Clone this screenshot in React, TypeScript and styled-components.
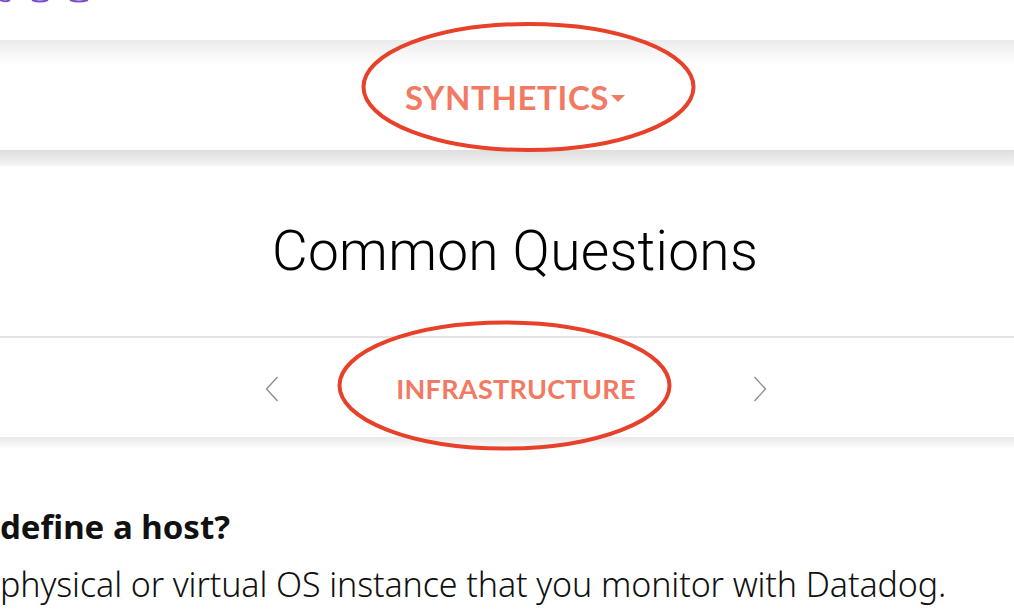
import React from "react";
import styled, { createGlobalStyle } from "styled-components";

const GlobalStyle = createGlobalStyle`
  html, body { margin: 0; padding: 0; background: #ffffff; }
  body { overflow: hidden; font-family: "Noto Sans", "Liberation Sans", sans-serif; }
  * { box-sizing: border-box; }
`;

const Page = styled.div`
  position: relative;
  width: 1014px;
  height: 612px;
  overflow: hidden;
  background: #ffffff;
`;

const LogoStrip = styled.div`
  height: 40px;
  display: flex;
  align-items: flex-start;
`;

const NavBar = styled.nav`
  height: 110px;
  background: linear-gradient(to bottom, #ebebeb 0px, #f7f7f7 14px, #ffffff 26px);
  display: flex;
  align-items: center;
  justify-content: center;
  padding-left: 16px;
  padding-top: 4px;
`;

const DropdownButton = styled.button`
  border: none;
  background: none;
  padding: 0;
  display: flex;
  align-items: center;
  gap: 2px;
  font-family: Lato, "Liberation Sans", sans-serif;
  font-weight: 700;
  font-size: 33px;
  letter-spacing: 0.6px;
  color: #f27a62;
  cursor: pointer;
`;

const Caret = styled.span`
  width: 0;
  height: 0;
  border-left: 7px solid transparent;
  border-right: 7px solid transparent;
  border-top: 7px solid #f27a62;
  margin-top: 2px;
`;

const HeadingSection = styled.section`
  height: 186px;
  background: linear-gradient(to bottom, #dedede 0px, #f3f3f3 15px, #ffffff 17px);
  display: flex;
  align-items: flex-start;
  justify-content: center;
  padding-top: 68px;
  padding-left: 16px;
`;

const Heading = styled.h2`
  margin: 0;
  font-family: Roboto, "Liberation Sans", sans-serif;
  font-weight: 300;
  font-size: 55px;
  line-height: 66px;
  color: #000000;
  letter-spacing: 0.3px;
`;

const TabBar = styled.div`
  height: 101px;
  border-top: 2px solid #e3e3e3;
  display: flex;
  align-items: center;
  justify-content: center;
  gap: 117px;
  padding-left: 18px;
  padding-top: 2px;
`;

const Chevron = styled.button`
  border: none;
  background: none;
  padding: 0;
  display: flex;
  cursor: pointer;
`;

const TabLabel = styled.span`
  font-family: Lato, "Liberation Sans", sans-serif;
  font-weight: 700;
  font-size: 27px;
  letter-spacing: 0.3px;
  color: #f27a62;
`;

const FaqSection = styled.section`
  height: 175px;
  background: linear-gradient(to bottom, #e8e8e8 0px, #f7f7f7 8px, #ffffff 12px);
  padding-top: 68px;
`;

const Question = styled.h3`
  margin: 0;
  font-family: "Noto Sans", "Liberation Sans", sans-serif;
  font-weight: 700;
  font-size: 33px;
  line-height: 44px;
  color: #111111;
`;

const Answer = styled.p`
  margin: 12px 0 0 0;
  font-family: "Noto Sans", "Liberation Sans", sans-serif;
  font-weight: 300;
  font-size: 34px;
  letter-spacing: -0.1px;
  line-height: 46px;
  color: #111111;
  white-space: nowrap;
`;

const Annotation = styled.svg`
  position: absolute;
  left: 0;
  top: 0;
  pointer-events: none;
`;

const ChevronIcon = ({ dir }: { dir: "left" | "right" }) => (
  <svg width="14" height="26" viewBox="0 0 14 26">
    <path
      d={dir === "left" ? "M12.5 1 L1.5 13 L12.5 25" : "M1.5 1 L12.5 13 L1.5 25"}
      fill="none"
      stroke="#8a8a8a"
      strokeWidth="1.3"
    />
  </svg>
);

export default function App() {
  return (
    <>
      <GlobalStyle />
      <Page>
        <LogoStrip>
          <svg width="120" height="4" viewBox="0 0 120 4">
            <path d="M0 0 Q5 2.5 10 0" stroke="#7a4ec9" strokeWidth="2" fill="none" />
            <path d="M32 0 Q40 3 48 0" stroke="#7a4ec9" strokeWidth="2" fill="none" />
            <path d="M70 0 Q79 3 88 0" stroke="#7a4ec9" strokeWidth="2" fill="none" />
          </svg>
        </LogoStrip>
        <NavBar>
          <DropdownButton>
            SYNTHETICS
            <Caret />
          </DropdownButton>
        </NavBar>
        <HeadingSection>
          <Heading>Common Questions</Heading>
        </HeadingSection>
        <TabBar>
          <Chevron aria-label="previous">
            <ChevronIcon dir="left" />
          </Chevron>
          <TabLabel>INFRASTRUCTURE</TabLabel>
          <Chevron aria-label="next">
            <ChevronIcon dir="right" />
          </Chevron>
        </TabBar>
        <FaqSection>
          <Question>define a host?</Question>
          <Answer>physical or virtual OS instance that you monitor with Datadog.</Answer>
        </FaqSection>
        <Annotation width="1014" height="612" viewBox="0 0 1014 612">
          <ellipse cx="528.5" cy="87" rx="165" ry="63" fill="none" stroke="#e8412a" strokeWidth="4" />
          <ellipse cx="504.5" cy="385.5" rx="165" ry="63" fill="none" stroke="#e8412a" strokeWidth="4" />
        </Annotation>
      </Page>
    </>
  );
}
